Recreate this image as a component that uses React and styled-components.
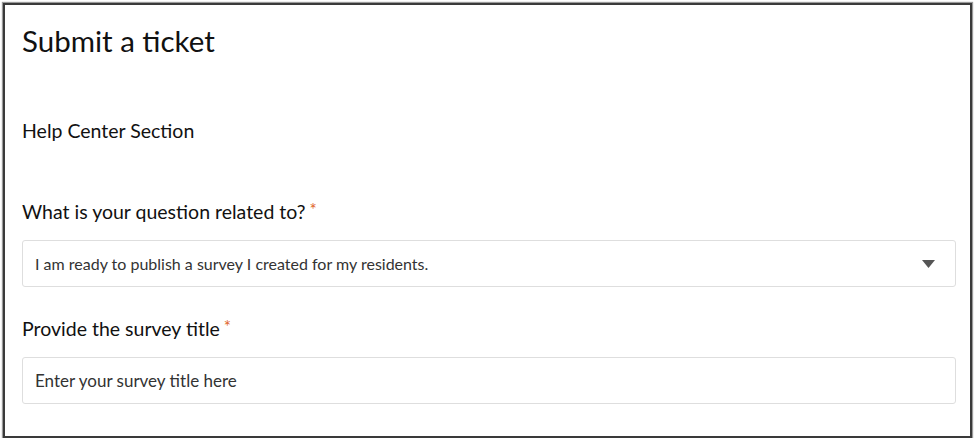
import React from "react";
import styled, { createGlobalStyle } from "styled-components";

const GlobalStyle = createGlobalStyle`
  html, body {
    margin: 0;
    padding: 0;
    background: #ffffff;
    font-family: Lato, "Open Sans", sans-serif;
    color: #111;
  }
`;

const Frame = styled.div`
  box-sizing: border-box;
  margin: 3px 4px 0 3px;
  width: 969px;
  height: 435px;
  border: 2px solid #3a3a3a;
  box-shadow: 0 0 1px 1px #9a9a9a;
  padding: 14px 17px 0 17px;
`;

const Title = styled.h1`
  margin: 0;
  font-size: 29.5px;
  font-weight: 400;
  line-height: 44px;
  color: #111;
`;

const Section = styled.h2`
  margin: 56px 0 0;
  font-size: 19.5px;
  font-weight: 400;
  line-height: 24px;
`;

const Field = styled.div`
  margin-top: ${(p) => p.$top}px;
  display: flex;
  flex-direction: column;
  gap: 17px;
`;

const Label = styled.label`
  font-size: 19.5px;
  line-height: 22px;
  color: #111;
`;

const Star = styled.span`
  color: #e0652a;
  font-size: 17px;
  margin-left: 4px;
  vertical-align: 3px;
`;

const Box = styled.div`
  box-sizing: border-box;
  height: 47px;
  width: 934px;
  border: 1px solid #dedede;
  border-radius: 3px;
  display: flex;
  align-items: center;
  justify-content: space-between;
  padding: 0 20px 0 12px;
  color: #333;
  font-size: ${(p) => p.$size}px;
`;

const Caret = styled.svg`
  width: 13px;
  height: 8px;
  fill: #555;
`;

export default function App() {
  return (
    <>
      <GlobalStyle />
      <Frame>
        <Title>Submit a ticket</Title>
        <Section>Help Center Section</Section>
        <Field $top={56}>
          <Label>
            What is your question related to?<Star>*</Star>
          </Label>
          <Box $size={16}>
            <span>I am ready to publish a survey I created for my residents.</span>
            <Caret viewBox="0 0 13 8">
              <path d="M0 0h13L6.5 8z" />
            </Caret>
          </Box>
        </Field>
        <Field $top={29}>
          <Label>
            Provide the survey title<Star>*</Star>
          </Label>
          <Box $size={17}>
            <span>Enter your survey title here</span>
          </Box>
        </Field>
      </Frame>
    </>
  );
}
